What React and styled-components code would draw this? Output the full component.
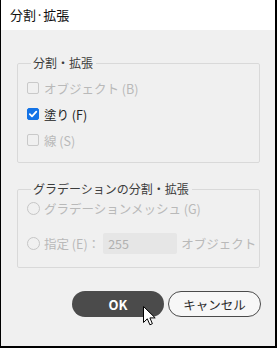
import React from 'react';
import styled, { createGlobalStyle } from 'styled-components';

const GlobalStyle = createGlobalStyle`
  html, body {
    margin: 0;
    padding: 0;
    background: #ffffff;
  }
  * {
    box-sizing: border-box;
  }
`;

function CheckMark() {
  return (
    <svg width="10" height="10" viewBox="0 0 10 10">
      <path d="M1.8 5.2 L4 7.4 L8.3 2.6" fill="none" stroke="#fff" strokeWidth="1.8" strokeLinecap="round" strokeLinejoin="round" />
    </svg>
  );
}

function Cursor() {
  return (
    <svg width="14" height="21" viewBox="0 0 14 21">
      <path d="M0.5 0.5 L0.5 16.5 L4.3 12.8 L6.9 18.8 L9.4 17.7 L6.9 11.9 L12.2 11.9 Z" fill="#fff" stroke="#000" strokeWidth="1" strokeLinejoin="miter" />
    </svg>
  );
}

function App() {
  return (
    <>
      <GlobalStyle />
      <Window>
        <TitleBar>分割·拡張</TitleBar>
        <Body>
          <Group $height={108} $top={25}>
            <Legend>分割・拡張</Legend>
            <Rows $gap={4} $padTop={6}>
              <Row $disabled>
                <CheckBox $disabled />
                オブジェクト (B)
              </Row>
              <Row>
                <CheckBox $checked><CheckMark /></CheckBox>
                塗り (F)
              </Row>
              <Row $disabled>
                <CheckBox $disabled />
                線 (S)
              </Row>
            </Rows>
          </Group>

          <Group $height={87} $top={18}>
            <Legend>グラデーションの分割・拡張</Legend>
            <Rows $gap={13} $padTop={0}>
              <Row $disabled>
                <Radio />
                グラデーションメッシュ (G)
              </Row>
              <Row $disabled>
                <Radio />
                指定 (E)：
                <NumberField value="255" disabled readOnly />
                オブジェクト
              </Row>
            </Rows>
          </Group>

          <ButtonRow>
            <PrimaryButton>OK</PrimaryButton>
            <SecondaryButton>キャンセル</SecondaryButton>
            <CursorWrap><Cursor /></CursorWrap>
          </ButtonRow>
        </Body>
      </Window>
    </>
  );
}

const Window = styled.div`
  position: relative;
  width: 277px;
  height: 348px;
  background: #f0f0f0;
  border-left: 1px solid #000;
  border-right: 2px solid #000;
  border-bottom: 2px solid #000;
  display: flex;
  flex-direction: column;
  font-family: "Noto Sans CJK JP", "Noto Sans", sans-serif;
`;

const TitleBar = styled.div`
  height: 30px;
  flex-shrink: 0;
  background: #ffffff;
  display: flex;
  align-items: center;
  padding-left: 9px;
  padding-bottom: 1px;
  font-size: 13px;
  color: #111;
`;

const Body = styled.div`
  padding: 0 15px 0 16px;
  display: flex;
  flex-direction: column;
`;

const Group = styled.fieldset`
  margin: ${(p) => p.$top}px 0 0 0;
  padding: 0 8px 0 9px;
  height: ${(p) => p.$height}px;
  border: 1px solid #d9d9d9;
  border-radius: 2px;
  min-width: 0;
`;

const Legend = styled.legend`
  padding: 0 3px 0 2px;
  margin-left: 4px;
  font-size: 12px;
  line-height: 16px;
  color: #3c3c3c;
`;

const Rows = styled.div`
  display: flex;
  flex-direction: column;
  gap: ${(p) => p.$gap}px;
  padding-top: ${(p) => p.$padTop}px;
`;

const Row = styled.div`
  height: 22px;
  display: flex;
  align-items: center;
  font-size: 12.5px;
  color: ${(p) => (p.$disabled ? '#b9b9b9' : '#222')};
  white-space: nowrap;
`;

const CheckBox = styled.span`
  width: 12px;
  height: 12px;
  margin-right: 5px;
  border-radius: 2px;
  display: flex;
  align-items: center;
  justify-content: center;
  flex-shrink: 0;
  background: ${(p) => (p.$checked ? '#1473e6' : 'transparent')};
  border: 1px solid ${(p) => (p.$checked ? '#1473e6' : '#c9c9c9')};
`;

const Radio = styled.span`
  width: 13px;
  height: 13px;
  margin-right: 4px;
  border-radius: 50%;
  border: 1px solid #c6c6c6;
  flex-shrink: 0;
`;

const NumberField = styled.input`
  width: 74px;
  height: 21px;
  margin: 0 4px 0 3px;
  padding: 0 0 0 5px;
  border: none;
  border-radius: 2px;
  background: #e6e6e6;
  font-family: "Noto Sans CJK JP", "Noto Sans", sans-serif;
  font-size: 12.5px;
  color: #b0b0b0;
  outline: none;
  -webkit-text-fill-color: #b0b0b0;
  opacity: 1;
`;

const ButtonRow = styled.div`
  position: relative;
  margin-top: 23px;
  display: flex;
  justify-content: flex-end;
  gap: 4px;
  margin-right: -1px;
`;

const BaseButton = styled.button`
  height: 26px;
  border-radius: 13px;
  font-family: "Noto Sans CJK JP", "Noto Sans", sans-serif;
  font-size: 12.5px;
  padding: 0;
  cursor: default;
`;

const PrimaryButton = styled(BaseButton)`
  width: 92px;
  background: #4b4b4b;
  border: none;
  color: #ffffff;
  font-weight: 700;
  font-size: 13px;
`;

const SecondaryButton = styled(BaseButton)`
  width: 93px;
  background: #f7f7f7;
  border: 1.5px solid #4b4b4b;
  color: #2a2a2a;
`;

const CursorWrap = styled.div`
  position: absolute;
  left: 126px;
  top: 15px;
  line-height: 0;
  pointer-events: none;
`;

export default App;
